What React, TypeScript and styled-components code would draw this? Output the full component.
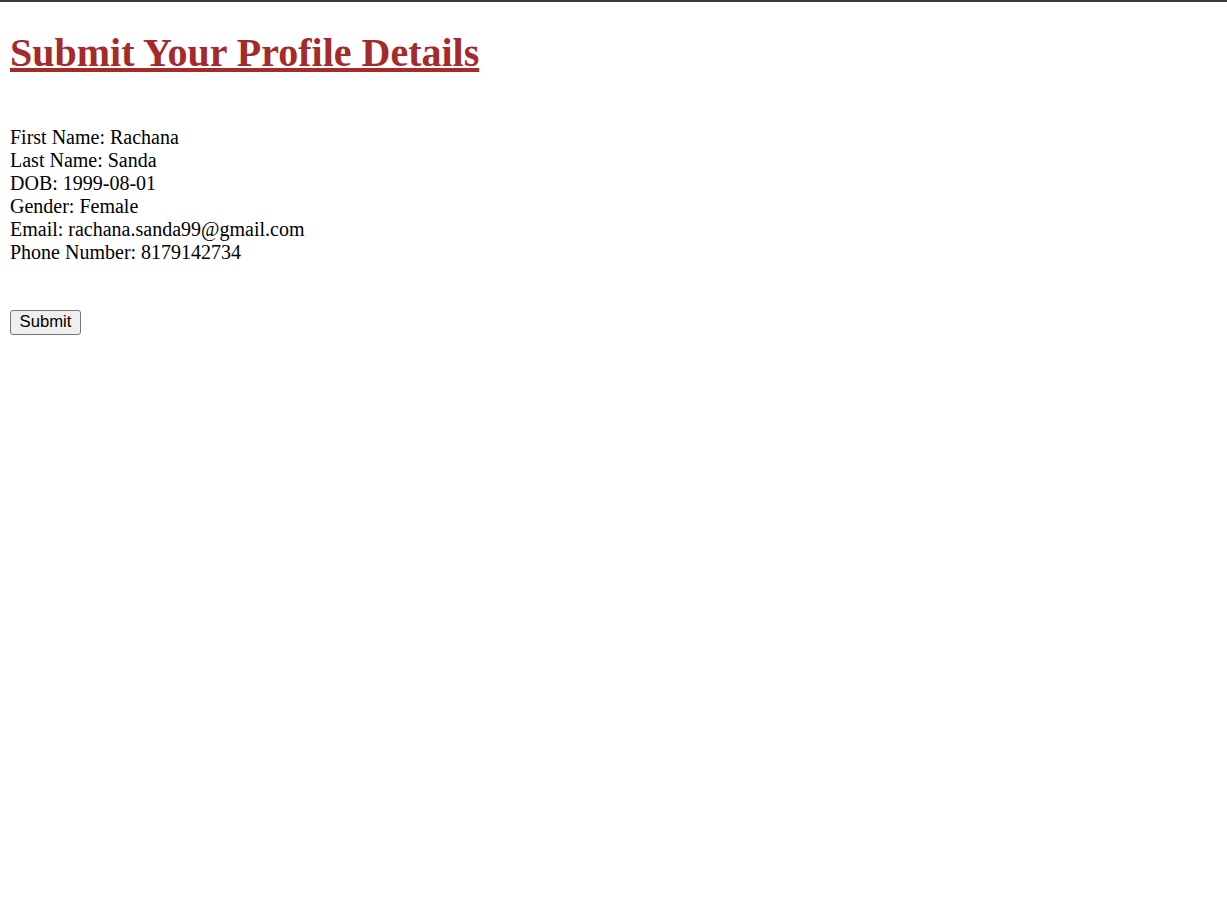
import React from "react";
import styled, { createGlobalStyle } from "styled-components";

const Global = createGlobalStyle`
  html, body { margin: 0; padding: 0; background: #fff; }
  body { border-top: 2px solid #3c3c3c; }
`;

const Page = styled.main`
  padding: 0 10px;
  font-family: "Liberation Serif", "Times New Roman", serif;
  font-size: 20px;
  color: #000;
`;

const Title = styled.h1`
  margin: 28px 0 0;
  font-size: 40px;
  line-height: 46px;
  font-weight: bold;
  color: #a52a2a;
  text-decoration: underline;
`;

const Details = styled.div`
  margin-top: 50px;
  display: flex;
  flex-direction: column;
  line-height: 23px;
`;

const Line = styled.div``;

const Actions = styled.div`
  margin-top: 45px;
`;

const Button = styled.button`
  font-family: "Liberation Sans", Arial, sans-serif;
  font-size: 16.67px;
  color: #000;
  background: #efefef;
  border: 1px solid #767676;
  border-radius: 3px;
  padding: 1px 8px;
  height: 25px;
  width: 71px;
  line-height: 20px;
`;

const rows: [string, string][] = [
  ["First Name", "Rachana"],
  ["Last Name", "Sanda"],
  ["DOB", "1999-08-01"],
  ["Gender", "Female"],
  ["Email", "rachana.sanda99@gmail.com"],
  ["Phone Number", "8179142734"],
];

export default function App() {
  return (
    <>
      <Global />
      <Page>
        <Title>Submit Your Profile Details</Title>
        <Details>
          {rows.map(([k, v]) => (
            <Line key={k}>
              {k}: {v}
            </Line>
          ))}
        </Details>
        <Actions>
          <Button type="button">Submit</Button>
        </Actions>
      </Page>
    </>
  );
}
